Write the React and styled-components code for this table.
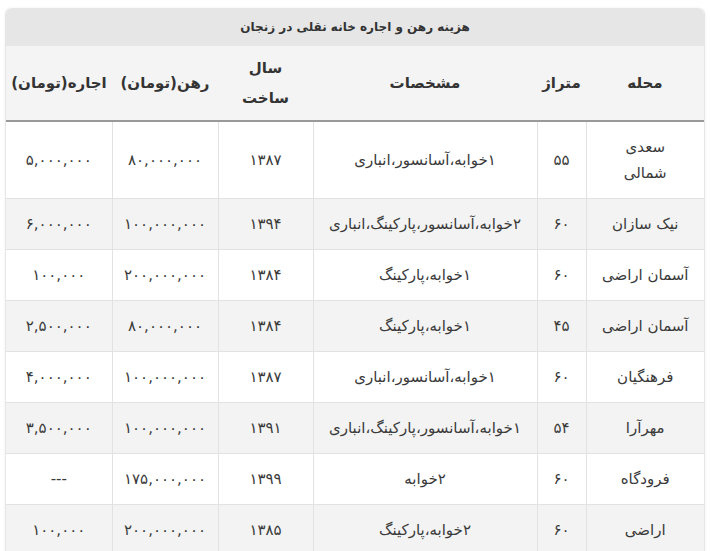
import React from "react";
import styled, { createGlobalStyle } from "styled-components";

const Global = createGlobalStyle`
  *, *::before, *::after { box-sizing: border-box; }
  html, body { margin: 0; padding: 0; background: #ffffff; }
  body { font-family: "DejaVu Sans", "Noto Sans", sans-serif; color: #333; }
`;

const Page = styled.div`
  padding: 8px 5px 0 5px;
`;

const Card = styled.div`
  direction: rtl;
  width: 700px;
  border: 1px solid #e6e6e6;
  border-top: none;
  border-radius: 6px 6px 0 0;
  box-shadow: 0 0 3px rgba(0, 0, 0, 0.06);
  overflow: hidden;
`;

const Caption = styled.div`
  height: 38px;
  background: #e6e6e6;
  display: flex;
  align-items: center;
  justify-content: center;
  font-size: 12px;
  font-weight: bold;
  color: #333;
  border-radius: 6px 6px 0 0;
`;

const Table = styled.table`
  width: 698px;
  border-collapse: collapse;
  table-layout: fixed;
`;

const HeadRow = styled.tr`
  background: #f4f4f4;
  border-bottom: 2px solid #999;
`;

const HeadCell = styled.th`
  width: ${(p) => p.$w}px;
  padding: 7px 4px;
  font-size: 15px;
  line-height: 30px;
  font-weight: bold;
  color: #333;
  text-align: center;
  white-space: nowrap;
`;

const Row = styled.tr`
  background: ${(p) => (p.$alt ? "#f3f3f3" : "#ffffff")};
  border-bottom: 1px solid #e2e2e2;
`;

const Cell = styled.td`
  padding: 12px 4px;
  font-size: 15px;
  line-height: 26px;
  color: #3a3a3a;
  text-align: center;
  white-space: nowrap;
  border-left: 1px solid #e2e2e2;
  &:last-child { border-left: none; }
`;

const cols = [
  { t: "محله", w: 118 },
  { t: "متراژ", w: 49 },
  { t: "مشخصات", w: 224 },
  { t: ["سال", "ساخت"], w: 95 },
  { t: "رهن(تومان)", w: 106 },
  { t: "اجاره(تومان)", w: 106 },
];

const rows = [
  [["سعدی", "شمالی"], "۵۵", "۱خوابه،آسانسور،انباری", "۱۳۸۷", "۸۰,۰۰۰,۰۰۰", "۵,۰۰۰,۰۰۰"],
  ["نیک سازان", "۶۰", "۲خوابه،آسانسور،پارکینگ،انباری", "۱۳۹۴", "۱۰۰,۰۰۰,۰۰۰", "۶,۰۰۰,۰۰۰"],
  ["آسمان اراضی", "۶۰", "۱خوابه،پارکینگ", "۱۳۸۴", "۲۰۰,۰۰۰,۰۰۰", "۱۰۰,۰۰۰"],
  ["آسمان اراضی", "۴۵", "۱خوابه،پارکینگ", "۱۳۸۴", "۸۰,۰۰۰,۰۰۰", "۲,۵۰۰,۰۰۰"],
  ["فرهنگیان", "۶۰", "۱خوابه،آسانسور،انباری", "۱۳۸۷", "۱۰۰,۰۰۰,۰۰۰", "۴,۰۰۰,۰۰۰"],
  ["مهرآرا", "۵۴", "۱خوابه،آسانسور،پارکینگ،انباری", "۱۳۹۱", "۱۰۰,۰۰۰,۰۰۰", "۳,۵۰۰,۰۰۰"],
  ["فرودگاه", "۶۰", "۲خوابه", "۱۳۹۹", "۱۷۵,۰۰۰,۰۰۰", "---"],
  ["اراضی", "۶۰", "۲خوابه،پارکینگ", "۱۳۸۵", "۲۰۰,۰۰۰,۰۰۰", "۱۰۰,۰۰۰"],
];

const lines = (v) =>
  Array.isArray(v)
    ? v.map((s, i) => (
        <React.Fragment key={i}>
          {i > 0 && <br />}
          {s}
        </React.Fragment>
      ))
    : v;

export default function App() {
  return (
    <>
      <Global />
      <Page>
        <Card>
          <Caption>هزینه رهن و اجاره خانه نقلی در زنجان</Caption>
          <Table>
            <thead>
              <HeadRow>
                {cols.map((c, i) => (
                  <HeadCell key={i} $w={c.w}>
                    {lines(c.t)}
                  </HeadCell>
                ))}
              </HeadRow>
            </thead>
            <tbody>
              {rows.map((r, i) => (
                <Row key={i} $alt={i % 2 === 1}>
                  {r.map((v, j) => (
                    <Cell key={j}>{lines(v)}</Cell>
                  ))}
                </Row>
              ))}
            </tbody>
          </Table>
        </Card>
      </Page>
    </>
  );
}
